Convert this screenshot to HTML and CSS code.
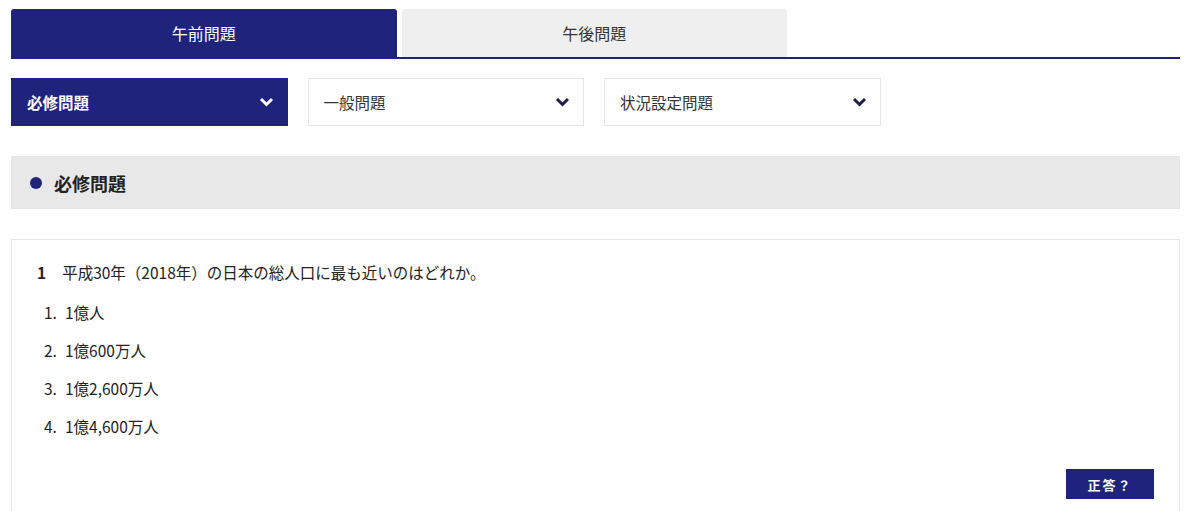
FILE: index.html
```html
<!DOCTYPE html>
<html lang="ja">
<head>
    <meta charset="UTF-8">
    <meta name="viewport" content="width=device-width, initial-scale=1.0">
    <title>必修問題</title>
    <link rel="stylesheet" href="styles.css">
</head>
<body>
    <div class="page">
        <div class="tabs">
            <div class="tab active">午前問題</div>
            <div class="tab">午後問題</div>
        </div>
        <div class="selects">
            <div class="select active">
                <span>必修問題</span>
                <svg width="15" height="10" viewBox="0 0 15 10"><polyline points="2,2 7.5,7.5 13,2" fill="none" stroke="currentColor" stroke-width="3"/></svg>
            </div>
            <div class="select">
                <span>一般問題</span>
                <svg width="15" height="10" viewBox="0 0 15 10"><polyline points="2,2 7.5,7.5 13,2" fill="none" stroke="currentColor" stroke-width="3"/></svg>
            </div>
            <div class="select">
                <span>状況設定問題</span>
                <svg width="15" height="10" viewBox="0 0 15 10"><polyline points="2,2 7.5,7.5 13,2" fill="none" stroke="currentColor" stroke-width="3"/></svg>
            </div>
        </div>
        <div class="heading">
            <span class="dot"></span>
            <h2>必修問題</h2>
        </div>
        <div class="card">
            <p class="question"><b>1</b>平成30年（2018年）の日本の総人口に最も近いのはどれか。</p>
            <ol class="choices">
                <li><span class="num">1.</span>1億人</li>
                <li><span class="num">2.</span>1億600万人</li>
                <li><span class="num">3.</span>1億2,600万人</li>
                <li><span class="num">4.</span>1億4,600万人</li>
            </ol>
            <div class="actions">
                <button type="button">正答？</button>
            </div>
        </div>
    </div>
</body>
</html>
```

FILE: styles.css
```css
body {
    margin: 0;
    font-family: 'Noto Sans CJK JP', 'Noto Sans', sans-serif;
    color: #222;
    background: #fff;
}
.page {
    margin: 9px 20px 0 11px;
}
.tabs {
    display: flex;
    gap: 5px;
    border-bottom: 2px solid #1f237c;
}
.tab {
    width: 385.5px;
    height: 48px;
    display: flex;
    align-items: center;
    justify-content: center;
    font-size: 16px;
    background: #efefef;
    border-radius: 3px 3px 0 0;
    color: #333;
}
.tab.active {
    background: #1f237c;
    color: #fff;
}
.selects {
    display: flex;
    gap: 20px;
    margin-top: 19px;
}
.select {
    width: 276.5px;
    height: 48px;
    box-sizing: border-box;
    border: 1px solid #e6e6e6;
    display: flex;
    align-items: center;
    justify-content: space-between;
    padding: 0 13px 0 15px;
    font-size: 15.5px;
    color: #333;
    background: #fff;
}
.select svg {
    color: #1a1f4e;
}
.select.active {
    background: #1f237c;
    border-color: #1f237c;
    color: #fff;
    font-weight: bold;
}
.select.active svg {
    color: #fff;
}
.heading {
    margin-top: 30px;
    height: 53px;
    background: #e8e8e8;
    display: flex;
    align-items: center;
    padding-left: 19px;
}
.dot {
    width: 12px;
    height: 12px;
    border-radius: 50%;
    background: #1f237c;
    margin-right: 12px;
}
.heading h2 {
    margin: 0;
    font-size: 18px;
    font-weight: bold;
    color: #222;
}
.card {
    margin-top: 30px;
    border: 1px solid #e6e6e6;
    padding: 21px 25px 30px 25px;
    min-height: 260px;
}
.question {
    margin: 0;
    font-size: 15.5px;
    line-height: 22px;
}
.question b {
    margin-right: 16px;
}
.choices {
    list-style: none;
    margin: 18px 0 0 0;
    padding: 0 0 0 7px;
    font-size: 15.5px;
}
.choices li {
    line-height: 22px;
    margin-bottom: 16px;
}
.num {
    display: inline-block;
    width: 21px;
}
.actions {
    display: flex;
    justify-content: flex-end;
    margin-top: 32px;
}
button {
    width: 88px;
    height: 30px;
    border: none;
    background: #1f237c;
    color: #fff;
    font-family: inherit;
    font-size: 13px;
    font-weight: bold;
    letter-spacing: 2px;
    cursor: pointer;
}
```
